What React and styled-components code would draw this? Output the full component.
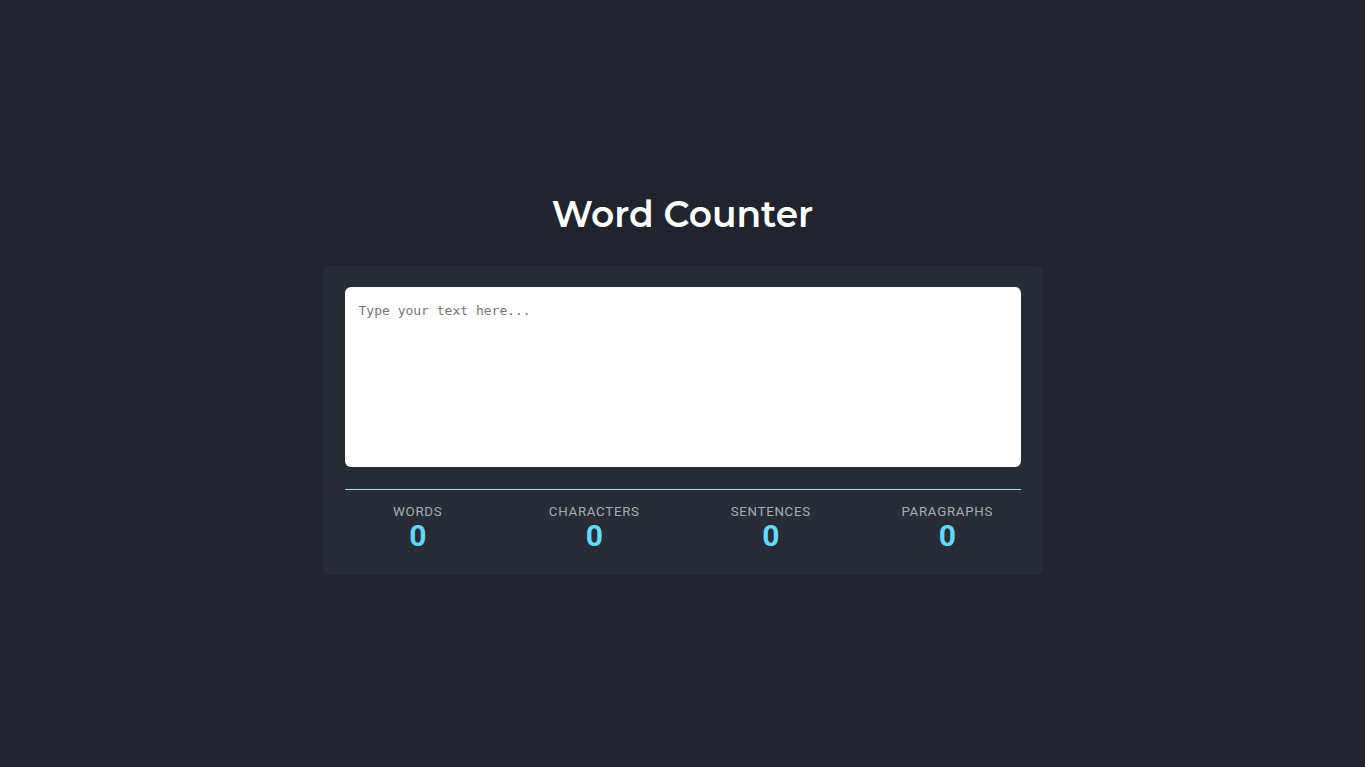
import styled, { createGlobalStyle } from 'styled-components'

const Global = createGlobalStyle`
  html, body {
    margin: 0;
    padding: 0;
    background: #21242c;
  }
  * { box-sizing: border-box; }
`

const Page = styled.main`
  min-height: 100vh;
  display: flex;
  flex-direction: column;
  align-items: center;
  justify-content: center;
`

const Title = styled.h1`
  margin: 0 0 30px;
  font-family: Montserrat, "Noto Sans", sans-serif;
  font-weight: 600;
  font-size: 36px;
  line-height: 44px;
  color: #ffffff;
`

const Card = styled.section`
  width: 720px;
  background: #282c34;
  border-radius: 6px;
  padding: 21px 22px 22px;
`

const TextBox = styled.textarea`
  display: block;
  width: 100%;
  height: 180px;
  border: none;
  border-radius: 6px;
  background: #fff;
  resize: none;
  padding: 16px 14px;
  font-family: "DejaVu Sans Mono", monospace;
  font-size: 13px;
  outline: none;
  &::placeholder { color: #757575; }
`

const Stats = styled.div`
  margin-top: 22px;
  border-top: 1px solid #a9d9e8;
  padding-top: 14px;
  display: grid;
  grid-template-columns: repeat(4, 1fr);
  column-gap: 30px;
`

const Stat = styled.div`
  display: flex;
  flex-direction: column;
  align-items: center;
  font-family: Roboto, sans-serif;
`

const Label = styled.span`
  font-size: 13.3px;
  line-height: 15px;
  letter-spacing: 0.7px;
  color: #a8adb5;
  text-transform: uppercase;
`

const Value = styled.span`
  font-size: 30px;
  line-height: 34px;
  font-weight: 700;
  color: #61dafb;
`

const stats = ['Words', 'Characters', 'Sentences', 'Paragraphs']

export default function App() {
  return <>
    <Global />
    <Page>
      <Title>Word Counter</Title>
      <Card>
        <TextBox placeholder='Type your text here...' />
        <Stats>
          {stats.map(s => (
            <Stat key={s}>
              <Label>{s}</Label>
              <Value>0</Value>
            </Stat>
          ))}
        </Stats>
      </Card>
    </Page>
  </>
}
